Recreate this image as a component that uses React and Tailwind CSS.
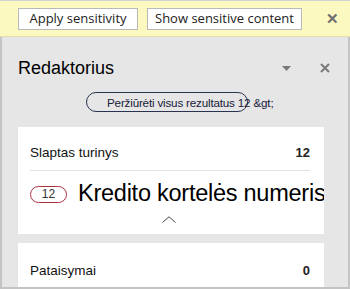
export default function App() {
  return (
    <div className="w-[350px] h-[289px] overflow-hidden flex flex-col bg-[#e6e6e6] font-['Liberation_Sans',Arial,sans-serif]">
      <div className="h-[37px] shrink-0 border-t border-[#d2d2d2] border-b border-b-[#e2dfa8] bg-[#fbf8c0] flex items-center pl-[18px] pr-[8px] font-['Open_Sans',sans-serif] text-[13px] text-[#222]">
        <button className="w-[120px] h-[22px] bg-white border border-[#b9b9b9] leading-none">
          Apply sensitivity
        </button>
        <button className="ml-[9px] w-[155px] h-[22px] bg-white border border-[#b9b9b9] leading-none">
          Show sensitive content
        </button>
        <span className="ml-auto mr-[3px] text-[#6e6e6e] text-[15px] font-bold leading-none">✕</span>
      </div>

      <div className="flex-1 min-h-0 border-l-2 border-r-2 border-b-2 border-[#c4c4c4] flex flex-col pl-[16px] pr-[24px]">
        <div className="shrink-0 flex items-center h-[54px] pt-[8px]">
          <h1 className="text-[18px] text-black leading-none">Redaktorius</h1>
          <svg className="ml-auto mr-[29px]" width="9" height="5" viewBox="0 0 9 5">
            <path d="M0 0h9L4.5 5z" fill="#7a7a7a" />
          </svg>
          <svg className="mr-[-6px]" width="10" height="10" viewBox="0 0 10 10">
            <path d="M1 1l8 8M9 1l-8 8" stroke="#7a7a7a" strokeWidth="2" />
          </svg>
        </div>

        <div className="shrink-0 h-[36px] relative">
          <div className="absolute left-[68px] top-[1px] w-[162px] h-[20px] rounded-full border border-[#2a3350]" />
          <span className="absolute left-[89px] top-[3px] text-[11.7px] tracking-[-0.2px] text-[#1a1a3a] whitespace-nowrap">
            Peržiūrėti visus rezultatus 12 &amp;gt;
          </span>
        </div>

        <div className="bg-white h-[107px] shrink-0 overflow-hidden pl-[12px] pr-[14px] pt-[16px] flex flex-col">
          <div className="flex items-center justify-between pb-[7px] border-b border-[#e1e1e1]">
            <span className="text-[13.5px] text-[#111]">Slaptas turinys</span>
            <span className="text-[13px] font-bold text-[#222]">12</span>
          </div>
          <div className="flex items-center mt-[11px] whitespace-nowrap">
            <span className="w-[37px] h-[17px] shrink-0 rounded-full border border-[#b03040] text-[12px] text-[#333] flex items-center justify-center leading-none">
              12
            </span>
            <span className="ml-[11px] text-[23.5px] tracking-[-0.25px] text-black leading-none">
              Kredito kortelės numeris
            </span>
          </div>
          <div className="flex justify-center mt-[10px] pr-[2px]">
            <svg width="14" height="7" viewBox="0 0 14 7">
              <path d="M0.5 6.5L7 0.8l6.5 5.7" fill="none" stroke="#444" strokeWidth="1" />
            </svg>
          </div>
        </div>

        <div className="mt-[9px] bg-white flex-1 min-h-0 overflow-hidden pl-[12px] pr-[14px] pt-[18px]">
          <div className="flex items-center justify-between pb-[6px] border-b border-[#e1e1e1]">
            <span className="text-[13.5px] text-[#111]">Pataisymai</span>
            <span className="text-[13px] font-bold text-[#222]">0</span>
          </div>
        </div>
      </div>
    </div>
  );
}
